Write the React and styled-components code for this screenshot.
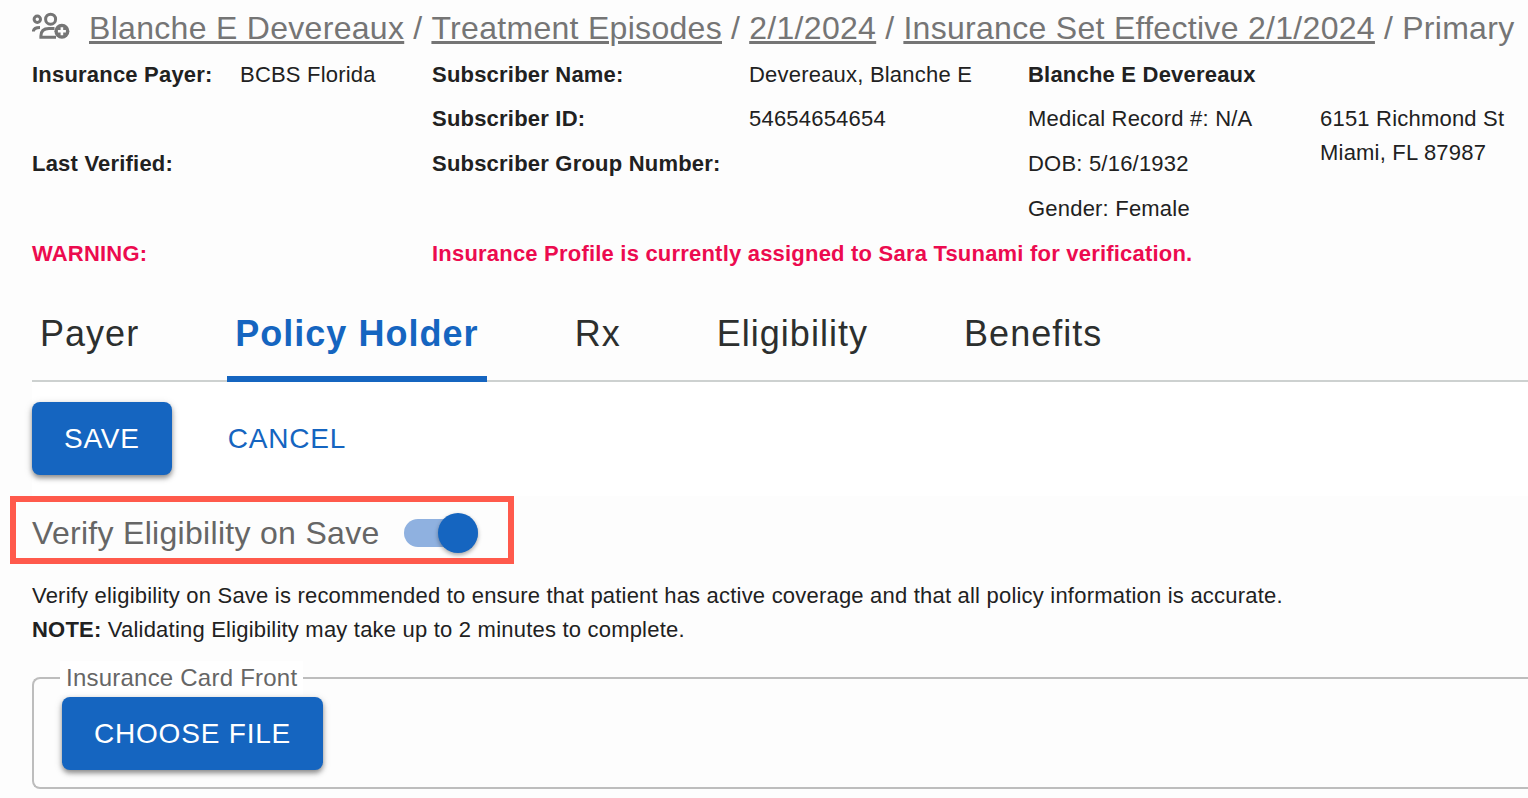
import React from 'react';
import styled, { createGlobalStyle } from 'styled-components';

const GlobalStyle = createGlobalStyle`
  * {
    box-sizing: border-box;
  }
  body {
    margin: 0;
    background: #fdfdfd;
    color: #212121;
    font-family: "Liberation Sans", Arial, Helvetica, sans-serif;
    font-size: 22px;
    line-height: 34px;
    letter-spacing: 0.00938em;
    overflow-x: hidden;
  }
`;

const Breadcrumbs = styled.nav`
  display: flex;
  align-items: center;
  height: 56px;
  padding-left: 32px;
  color: #757575;
  font-size: 32px;
  letter-spacing: 0.00938em;
  white-space: nowrap;
`;

const PeopleIcon = styled.svg`
  flex: none;
  width: 38px;
  height: 28px;
  margin-right: 19px;
  margin-bottom: 4px;
`;

const Crumb = styled.a`
  color: inherit;
  text-decoration: underline;
  text-decoration-thickness: 3px;
  text-underline-offset: 2px;
`;

const Slash = styled.span`
  margin: 0 9px;
`;

const Summary = styled.section`
  display: grid;
  grid-template-columns: 208fr 192fr 317fr 279fr 292fr 208fr;
  grid-template-rows: 44px;
  grid-auto-rows: 45px;
  padding: 2px 0 0 32px;
  white-space: nowrap;
`;

const Label = styled.strong`
  grid-column: ${props => props.$col};
  grid-row: ${props => props.$row};
`;

const Value = styled.span`
  grid-column: ${props => props.$col};
  grid-row: ${props => props.$row};
`;

const Address = styled.address`
  grid-column: 6;
  grid-row: 2 / 4;
  font-style: normal;
`;

const Warning = styled(Label)`
  color: #ec0b4f;
`;

const Tabs = styled.div`
  display: flex;
  gap: 80px;
  height: 100px;
  margin-left: 32px;
  box-shadow: inset 0 -2px 0 #cdd1d0;
`;

const Tab = styled.button`
  padding: 10px 8px 0;
  border: 0;
  border-bottom: 6px solid ${props => (props.$active ? '#1565c0' : 'transparent')};
  background: none;
  color: ${props => (props.$active ? '#1565c0' : '#2c2f2e')};
  font-family: inherit;
  font-size: 36px;
  font-weight: ${props => (props.$active ? 'bold' : 'normal')};
  letter-spacing: 0.02857em;
  cursor: pointer;
`;

const Actions = styled.div`
  display: flex;
  gap: 24px;
  margin-left: 32px;
  padding: 20px 0 21px;
  background: #fff;
`;

const Button = styled.button`
  padding: 12px 32px;
  border: 0;
  border-radius: 8px;
  background: ${props => (props.$plain ? 'none' : '#1565c0')};
  box-shadow: ${props => (props.$plain ? 'none' : '0 3px 5px rgba(0, 0, 0, 0.4), 0 2px 10px rgba(0, 0, 0, 0.12)')};
  color: ${props => (props.$plain ? '#1565c0' : '#fff')};
  font-family: inherit;
  font-size: 28px;
  line-height: 49px;
  letter-spacing: 0.02857em;
  cursor: pointer;
`;

const Highlight = styled.div`
  width: fit-content;
  margin-left: 10px;
  padding: 6px 30px 0 16px;
  border: 6px solid #ff5a4c;
`;

const SwitchLabel = styled.label`
  display: flex;
  align-items: center;
  gap: 24px;
  height: 50px;
  color: #666;
  font-size: 32px;
  letter-spacing: 0.00938em;
`;

const Switch = styled.input`
  appearance: none;
  display: flex;
  align-items: center;
  width: 74px;
  height: 28px;
  margin: 0;
  border-radius: 14px;
  background: #8fb1e0;
  cursor: pointer;

  &::before {
    content: "";
    width: 40px;
    height: 40px;
    border-radius: 50%;
    background: #fafafa;
    box-shadow: 0 2px 4px rgba(0, 0, 0, 0.35);
  }
  &:checked::before {
    margin-left: auto;
    background: #1565c0;
  }
`;

const Note = styled.p`
  margin: 15px 0 0 32px;
`;

const FileGroup = styled.fieldset`
  min-width: 0;
  margin: 14px 0 0 32px;
  padding: 2px 28px 17px;
  border: 2px solid #bdbdbd;
  border-right: 0;
  border-radius: 8px 0 0 8px;
`;

const Legend = styled.legend`
  margin-left: -2px;
  padding: 0 6px;
  background: #fff;
  color: #666;
  font-size: 24px;
  letter-spacing: 0.00938em;
`;

const crumbs = ['Blanche E Devereaux', 'Treatment Episodes', '2/1/2024', 'Insurance Set Effective 2/1/2024'];
const tabs = ['Payer', 'Policy Holder', 'Rx', 'Eligibility', 'Benefits'];

function App() {
  const [active, setActive] = React.useState('Policy Holder');

  return (
    <main>
      <GlobalStyle />
      <Breadcrumbs aria-label="Breadcrumb">
        <PeopleIcon viewBox="0 0 38 28" fill="none" stroke="#757575" strokeWidth="3" aria-hidden="true">
          <circle cx="5.3" cy="7.3" r="3.2" />
          <circle cx="18.6" cy="7.2" r="5" />
          <path d="M1.4 19.5C1.4 17 3.5 15.5 8 15.5" />
          <path d="M24 25.2H8.9V24C8.9 19 12 16.4 17 16.4H22.5" />
          <circle cx="29.9" cy="19.3" r="7.5" fill="#757575" stroke="none" />
          <path d="M29.9 15.3V23.3M25.9 19.3H33.9" stroke="#fdfdfd" strokeWidth="2.6" />
        </PeopleIcon>
        {crumbs.map(text => (
          <React.Fragment key={text}>
            <Crumb href="#">{text}</Crumb>
            <Slash>/</Slash>
          </React.Fragment>
        ))}
        <span aria-current="page">Primary</span>
      </Breadcrumbs>

      <Summary>
        <Label $col={1} $row={1}>Insurance Payer:</Label>
        <Value $col={2} $row={1}>BCBS Florida</Value>
        <Label $col={1} $row={3}>Last Verified:</Label>
        <Label $col={3} $row={1}>Subscriber Name:</Label>
        <Value $col={4} $row={1}>Devereaux, Blanche E</Value>
        <Label $col={3} $row={2}>Subscriber ID:</Label>
        <Value $col={4} $row={2}>54654654654</Value>
        <Label $col={3} $row={3}>Subscriber Group Number:</Label>
        <Label $col={5} $row={1}>Blanche E Devereaux</Label>
        <Value $col={5} $row={2}>Medical Record #: N/A</Value>
        <Value $col={5} $row={3}>DOB: 5/16/1932</Value>
        <Value $col={5} $row={4}>Gender: Female</Value>
        <Address>
          6151 Richmond St<br />
          Miami, FL 87987
        </Address>
        <Warning $col={1} $row={5}>WARNING:</Warning>
        <Warning $col="3 / 7" $row={5}>
          Insurance Profile is currently assigned to Sara Tsunami for verification.
        </Warning>
      </Summary>

      <Tabs role="tablist">
        {tabs.map(name => (
          <Tab
            key={name}
            type="button"
            role="tab"
            aria-selected={name === active}
            $active={name === active}
            onClick={() => setActive(name)}
          >
            {name}
          </Tab>
        ))}
      </Tabs>

      <Actions>
        <Button type="button">SAVE</Button>
        <Button type="button" $plain>CANCEL</Button>
      </Actions>

      <Highlight>
        <SwitchLabel htmlFor="verify">
          Verify Eligibility on Save
          <Switch id="verify" type="checkbox" role="switch" defaultChecked />
        </SwitchLabel>
      </Highlight>

      <Note>
        Verify eligibility on Save is recommended to ensure that patient has active coverage and that all policy
        information is accurate.
        <br />
        <strong>NOTE:</strong> Validating Eligibility may take up to 2 minutes to complete.
      </Note>

      <FileGroup>
        <Legend>Insurance Card Front</Legend>
        <Button type="button">CHOOSE FILE</Button>
      </FileGroup>
    </main>
  );
}

export default App;
